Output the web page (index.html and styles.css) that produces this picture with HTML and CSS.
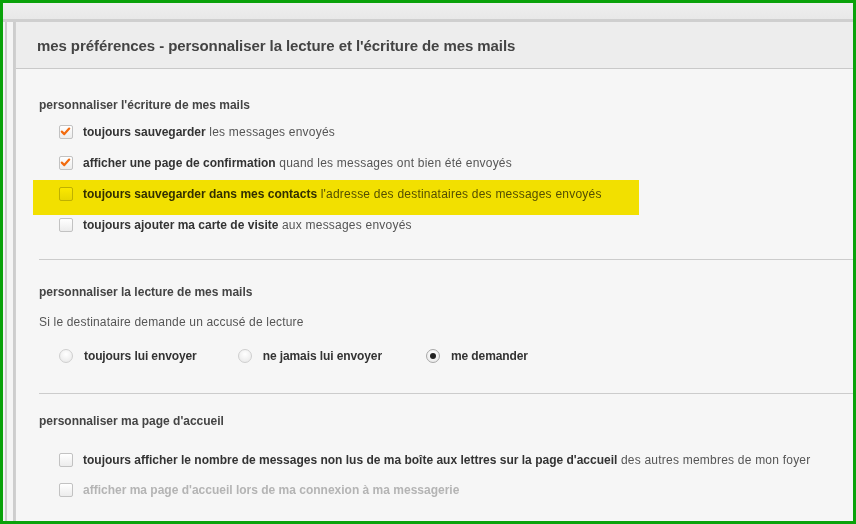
FILE: index.html
```html
<!DOCTYPE html>
<html lang="fr">
<head>
<meta charset="utf-8">
<title>mes préférences</title>
<link rel="stylesheet" href="styles.css">
</head>
<body>
<div class="frame">
  <div class="topbar"></div>
  <div class="main">
    <div class="tabs">
      <div class="tabs-inner"></div>
    </div>
    <div class="panel">
      <div class="panel-header">mes préférences - personnaliser la lecture et l'écriture de mes mails</div>
      <div class="panel-body">
        <section class="section s1">
          <h3 class="heading">personnaliser l'écriture de mes mails</h3>
          <ul class="opts">
            <li class="opt"><span class="cb checked"><svg width="13" height="13" viewBox="0 0 13 13"><path d="M2.8 6.6 L5.3 9.1 L10.2 3.6" fill="none" stroke="#f26b0f" stroke-width="2.2" stroke-linecap="round" stroke-linejoin="round"/></svg></span><span class="lbl"><b>toujours sauvegarder</b> les messages envoyés</span></li>
            <li class="opt"><span class="cb checked"><svg width="13" height="13" viewBox="0 0 13 13"><path d="M2.8 6.6 L5.3 9.1 L10.2 3.6" fill="none" stroke="#f26b0f" stroke-width="2.2" stroke-linecap="round" stroke-linejoin="round"/></svg></span><span class="lbl"><b>afficher une page de confirmation</b> quand les messages ont bien été envoyés</span></li>
            <li class="opt highlight"><span class="cb"></span><span class="lbl"><b>toujours sauvegarder dans mes contacts</b> l'adresse des destinataires des messages envoyés</span></li>
            <li class="opt"><span class="cb"></span><span class="lbl"><b>toujours ajouter ma carte de visite</b> aux messages envoyés</span></li>
          </ul>
        </section>
        <section class="section s2">
          <h3 class="heading">personnaliser la lecture de mes mails</h3>
          <p class="sub">Si le destinataire demande un accusé de lecture</p>
          <div class="radios">
            <span class="ropt"><span class="radio"></span><b>toujours lui envoyer</b></span>
            <span class="ropt"><span class="radio"></span><b>ne jamais lui envoyer</b></span>
            <span class="ropt last"><span class="radio on"></span><b>me demander</b></span>
          </div>
        </section>
        <section class="section s3">
          <h3 class="heading">personnaliser ma page d'accueil</h3>
          <ul class="opts">
            <li class="opt short"><span class="cb"></span><span class="lbl"><b>toujours afficher le nombre de messages non lus de ma boîte aux lettres sur la page d'accueil</b> des autres membres de mon foyer</span></li>
            <li class="opt short disabled"><span class="cb"></span><span class="lbl"><b>afficher ma page d'accueil lors de ma connexion à ma messagerie</b></span></li>
          </ul>
        </section>
      </div>
    </div>
  </div>
</div>
</body>
</html>
```

FILE: styles.css
```css
* { box-sizing: border-box; }
html, body { margin: 0; padding: 0; }
body {
  width: 856px;
  height: 524px;
  overflow: hidden;
  font-family: "Liberation Sans", Arial, sans-serif;
  font-size: 12px;
  color: #333;
}
.frame {
  width: 856px;
  height: 524px;
  border: 3px solid #0aa20a;
  background: #f6f6f6;
  display: flex;
  flex-direction: column;
  overflow: hidden;
}
.topbar {
  height: 19px;
  flex: none;
  background: linear-gradient(#efefef, #e8e8e8);
  border-bottom: 3px solid #cfcfcf;
}
.main {
  flex: 1;
  display: flex;
  min-height: 0;
}
.tabs {
  width: 12px;
  flex: none;
  background: #f3f3f3;
  padding-left: 2px;
}
.tabs-inner {
  height: 100%;
  border-left: 2px solid #cdcdcd;
  border-right: 2px solid #cdcdcd;
  background: #f4f4f4;
  width: 10px;
}
.panel {
  flex: 1;
  display: flex;
  flex-direction: column;
  border-left: 1px solid #d0d0d0;
}
.panel-header {
  height: 47px;
  flex: none;
  background: #ededed;
  border-bottom: 1px solid #c9c9c9;
  padding-left: 21px;
  display: flex;
  align-items: center;
  font-size: 15px;
  font-weight: bold;
  letter-spacing: -0.08px;
  color: #444;
}
.panel-body {
  flex: 1;
  background: #f6f6f6;
  padding-left: 23px;
}
.section { border-bottom: 1px solid #cccccc; }
.section.s3 { border-bottom: none; }
.heading {
  margin: 0;
  font-size: 12px;
  line-height: 16px;
  font-weight: bold;
  color: #444;
}
.s1 { padding-top: 28px; padding-bottom: 19px; }
.s1 .heading { margin-bottom: 3px; }
.s2 { padding-top: 24px; padding-bottom: 22px; }
.s3 { padding-top: 19px; }
.s3 .heading { margin-bottom: 16px; }
.opts { list-style: none; margin: 0; padding: 0; }
.opt {
  height: 31px;
  display: flex;
  align-items: center;
  padding-left: 20px;
  position: relative;
}
.opt.short { height: 30px; }
.lbl { color: #555; letter-spacing: 0.22px; }
.lbl b { color: #333; letter-spacing: 0; }
.opt.disabled .lbl, .opt.disabled .lbl b { color: #b4b4b4; }
.cb {
  width: 14px;
  height: 14px;
  flex: none;
  border: 1px solid #c2c2c2;
  border-radius: 2px;
  background: linear-gradient(#ffffff, #ececec);
  margin-right: 10px;
  display: inline-flex;
}
.cb svg { display: block; margin: -1px 0 0 -1px; }
.highlight::after {
  content: "";
  position: absolute;
  left: -6px;
  width: 606px;
  top: 2px;
  height: 35px;
  background: #fbe900;
  mix-blend-mode: multiply;
  pointer-events: none;
}
.sub {
  margin: 14px 0 0 0;
  line-height: 16px;
  color: #555;
  letter-spacing: 0.18px;
}
.radios {
  display: flex;
  gap: 41px;
  height: 31px;
  align-items: center;
  margin-top: 10px;
  padding-left: 20px;
}
.ropt { display: flex; align-items: center; color: #333; letter-spacing: -0.1px; }
.ropt.last { margin-left: 3px; }
.radio {
  width: 14px;
  height: 14px;
  border-radius: 50%;
  border: 1px solid #cfcfcf;
  background: radial-gradient(circle at 50% 35%, #ffffff, #e6e6e6);
  margin-right: 11px;
  display: inline-flex;
  align-items: center;
  justify-content: center;
}
.radio.on { border-color: #a8a8a8; }
.radio.on::before {
  content: "";
  width: 6px;
  height: 6px;
  border-radius: 50%;
  background: #222;
}
```
